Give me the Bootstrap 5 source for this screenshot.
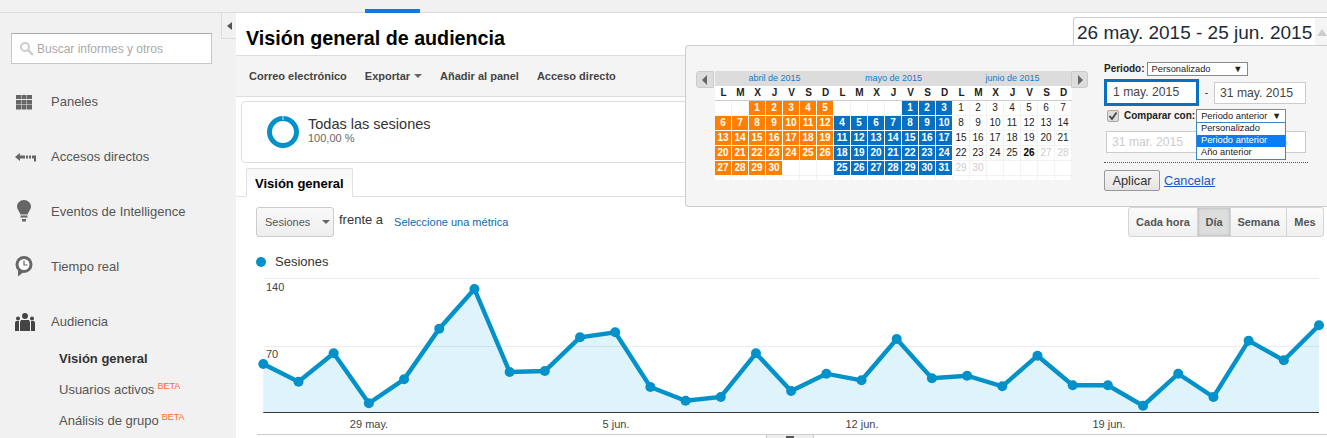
<!doctype html>
<html lang="es">
<head>
  <meta charset="utf-8">
  <meta name="viewport" content="width=device-width, initial-scale=1">
  <title>Visión general de audiencia</title>
  <link href="https://cdn.jsdelivr.net/npm/bootstrap@5.3.3/dist/css/bootstrap.min.css" rel="stylesheet">
  <style>
    html, body { height: 438px; overflow: hidden; }
    body { font-family: "Liberation Sans", Arial, sans-serif; font-size: 13px; color: #333; background: #fff; }

    .top-strip { height: 13px; background: #f1f1f1; border-bottom: 1px solid #dcdcdc; position: relative; }
    .top-strip-active { position: absolute; left: 365px; bottom: -1px; width: 55px; height: 4px; background: #0d7be6; }

    .side { width: 236px; height: 425px; flex: none; background: #f1f1f1; position: relative; }
    .side-toggle { position: absolute; right: 0; top: 0; width: 15px; height: 26px; background: #f1f1f1; border: 1px solid #ddd; border-top: 0; border-right: 0; }
    .side-toggle::after { content: ""; position: absolute; left: 5px; top: 9px; border: 4px solid transparent; border-left: 0; border-right: 5px solid #555; }
    .side-search { margin: 20px 0 0 11px; width: 201px; height: 31px; background: #fff; border: 1px solid #c6c6c6; border-top-color: #aaa; padding-left: 7px; color: #a9a9a9; font-size: 12px; gap: 2px; }
    .side-menu { margin-top: 10px; }
    .side-item { height: 55px; color: #555; font-size: 13px; }
    .side-icon { width: 51px; flex: none; padding-left: 15px; }
    .side-sub { padding-left: 59px; color: #555; margin-top: -6px; }
    .side-sub li { height: 31px; line-height: 31px; white-space: nowrap; }
    .side-sub b { color: #333; }
    .beta { color: #ff6a22; font-size: 9px; position: relative; top: -5px; margin-left: 3px; }

    .main { flex: 1; min-width: 0; position: relative; }
    .main-head { height: 43px; border-bottom: 1px solid #ddd; padding-left: 10px; }
    .main-title { font-size: 19.7px; font-weight: 700; color: #000; margin: 0; line-height: 50px; }
    .date-range { position: absolute; left: 837px; top: 4px; width: 254px; height: 40px; background: #fff; border: 1px solid #ccc; border-right: 0; border-radius: 3px 0 0 0; font-size: 19px; color: #1c2b36; padding: 1px 0 0 3px; white-space: nowrap; }
    .date-range::after { content: ""; position: absolute; right: 0; top: 0; width: 12px; height: 40px; background: #f5f5f5; }
    .date-arrow { position: absolute; right: 0; top: 11px; border: 5px solid transparent; border-top: 0; border-bottom: 7px solid #ccc; z-index: 1; }

    .tool-bar { height: 41px; background: #f4f4f4; border-bottom: 1px solid #ddd; padding-left: 13px; gap: 18px; font-size: 11px; font-weight: 700; color: #444; }
    .caret-down { display: inline-block; margin-left: 4px; vertical-align: 2px; border: 4px solid transparent; border-bottom: 0; border-top: 4px solid #666; }

    .seg-card { margin: 4px 5px 0; height: 62px; border: 1px solid #ddd; border-radius: 4px; padding-left: 25px; gap: 9px; }
    .seg-name { font-size: 14.5px; line-height: 15px; color: #333; margin-top: -2px; }
    .seg-pct { font-size: 11px; line-height: 13px; color: #666; }

    .tab-row { margin-top: 5px; height: 29px; padding-left: 10px; border-bottom: 1px solid #ccc; }
    .tab-row .nav-link { height: 29px; width: 107px; padding: 5px 0 0 8px; font-size: 13px; font-weight: 700; color: #222; border: 1px solid #ccc; border-bottom-color: #fff; border-radius: 2px 2px 0 0; background: linear-gradient(#f7f7f7, #fff); }

    .metric-row { height: 30px; margin-top: 10px; padding: 0 3px 0 20px; }
    .metric-select { width: 78px; height: 30px; border: 1px solid #ccc; border-radius: 3px; background: linear-gradient(#f9f9f9, #eee); color: #555; font-size: 11px; padding: 0 0 0 8px; margin-right: 5px; }
    .metric-select .caret-down { margin-left: 12px; }
    .metric-vs { color: #333; font-size: 13px; margin-right: 11px; position: relative; top: -2px; }
    .metric-link { color: #1266a8; font-size: 11px; text-decoration: none; }
    .time-btns .btn { height: 30px; padding: 0; font-size: 11px; font-weight: 700; color: #555; border: 1px solid #d4d4d4; border-radius: 0; background: linear-gradient(#fafafa, #f0f0f0); }
    .time-btns .btn:first-child { width: 70px; border-radius: 3px 0 0 3px; }
    .time-btns .btn:nth-child(2) { width: 34px; background: #ddd; box-shadow: inset 0 0 3px #aaa; }
    .time-btns .btn:nth-child(3) { width: 57px; }
    .time-btns .btn:last-child { width: 38px; border-radius: 0 3px 3px 0; }

    .legend-row { margin-top: 17px; padding-left: 20px; height: 16px; gap: 9px; font-size: 13px; color: #333; }
    .legend-dot { width: 10px; height: 10px; border-radius: 50%; background: #0391c9; }

    .chart-box { display: block; margin-top: 5px; }
    .chart-box text { font-family: "Liberation Sans", Arial, sans-serif; font-size: 11px; fill: #444; }

    .cal-pop { position: absolute; left: 449px; top: 32px; width: 643px; height: 162px; background: #f5f5f5; border: 1px solid #ccc; border-right: 0; border-radius: 4px 0 0 4px; padding: 25px 0 0 10px; z-index: 5; }
    .cal-nav { width: 18px; height: 17px; background: #dcdcdc; border: 1px solid #ccc; border-radius: 3px 0 0 3px; position: relative; flex: none; }
    .cal-nav::after { content: ""; position: absolute; left: 5px; top: 3px; border: 5px solid transparent; border-left: 0; border-right: 5px solid #666; }
    .cal-nav-next { width: 17px; margin-left: -1px; border-radius: 0 3px 3px 0; }
    .cal-nav-next::after { border-right: 0; border-left: 5px solid #666; left: 6px; }
    .cal-grid { display: grid; grid-template-columns: repeat(21, 17px); grid-auto-rows: 15px; background: #fff; font-size: 10px; text-align: center; width: 357px; height: 109px; margin-left: 1px; overflow: hidden; }
    .cal-month { grid-column: span 7; background: #dcdcdc; color: #0b7ed0; line-height: 14px; font-size: 9px; }
    .cal-day-name { font-weight: 700; color: #222; line-height: 14px; border-bottom: 1px solid #ccc; }
    .cal-cell { line-height: 14px; border-right: 1px solid #f2f2f2; border-bottom: 1px solid #f2f2f2; color: #222; }
    .cal-old { background: #ff7f00; color: #fff; font-weight: 700; border-color: #fff; }
    .cal-cur { background: #0670c4; color: #fff; font-weight: 700; border-color: #fff; }
    .cal-off { color: #ccc; }
    .cal-today { font-weight: 700; color: #000; }

    .cal-side { width: 204px; margin-left: 16px; margin-top: -10px; font-size: 10px; color: #222; position: relative; }
    .cal-label { font-weight: 700; }
    .period-label { margin-right: 2px; }
    .fake-select { background: #fff; border: 1px solid #888; height: 14px; line-height: 12px; padding: 0 4px; font-size: 9.3px; flex: none; }
    .cal-line { padding-right: 2px; margin-top: 3px; }
    .date-in { height: 22px; background: #fff; border: 1px solid #ccc; font-size: 12.2px; color: #444; line-height: 20px; padding-left: 5px; white-space: nowrap; flex: none; }
    .date-on { width: 95px; height: 27px; border: 3px solid #0670c4; padding-left: 6px; }
    .date-end { width: 92px; }
    .date-start { width: 93px; margin-left: 2px; }
    .date-off { color: #ccc; }
    .check-box { width: 12px; height: 12px; margin-left: 3px; border: 1px solid #aaa; border-radius: 2px; background: #ddd; line-height: 0; flex: none; }
    .compare-label { margin-left: 5px; }
    .compare-select { width: 90px; margin-left: 1px; }
    .drop-list { position: absolute; left: 92px; top: 61px; width: 90px; background: #fff; border: 1px solid #3a86c8; font-size: 9.3px; z-index: 6; }
    .drop-list div { height: 12px; line-height: 11px; padding-left: 4px; }
    .drop-list .picked { background: #0a7cf5; color: #fff; }
    .compare-row { margin-top: 2px; }
    .compare-dates { margin-top: 8px; }
    .cal-rule { border-top: 1px dotted #555; margin-top: 9px; }
    .cal-actions { margin-top: 7px; }
    .apply-btn { width: 56px; height: 21px; padding: 0; border: 1px solid #999; border-radius: 2px; background: linear-gradient(#f5f5f5, #e4e4e4); font-size: 12.8px; color: #333; }
    .cancel-link { font-size: 12.8px; color: #1a56c4; }

    .chart-foot { position: absolute; left: 530px; top: 421px; width: 48px; height: 8px; background: #eee; border: 1px solid #ccc; border-bottom: 0; }
    .chart-foot::after { content: ""; position: absolute; left: 19px; top: 1px; width: 8px; height: 2px; background: #555; }
  </style>
</head>
<body>
  <div class="top-strip"><span class="top-strip-active"></span></div>
  <div class="d-flex">
    <aside class="side">
      <span class="side-toggle"></span>
      <div class="side-search d-flex align-items-center">
        <svg width="16" height="16" viewBox="0 0 16 16"><circle cx="6" cy="6" r="4" fill="none" stroke="#ccc" stroke-width="2"/><path d="M9 9l5 5" stroke="#ccc" stroke-width="2.4"/></svg>
        <span>Buscar informes y otros</span>
      </div>
      <ul class="side-menu list-unstyled mb-0">
        <li class="side-item d-flex align-items-center">
          <span class="side-icon"><svg class="d-block" width="18" height="16" viewBox="0 0 18 16" fill="#666"><path d="M2 1h5v4H2zM7.500 1h4.500v4H7.500zM12.500 1H18v4h-5.500zM2 6h5v4.500H2zM7.500 6h4.500v4.500H7.500zM12.500 6H18v4.500h-5.500zM2 11h5v4.500H2zM7.500 11h4.500v4.500H7.500zM12.500 11H18v4.500h-5.500z" transform="translate(-1 0)"/></svg></span>
          <span>Paneles</span>
        </li>
        <li class="side-item d-flex align-items-center">
          <span class="side-icon"><svg class="d-block" width="22" height="12" viewBox="0 0 22 12" fill="#666"><path d="M0 6l5-4v2.500h5v3H5V10zM11 4.500h2v3h-2zM14 4.500h2v3h-2zM17 4.500h4v6h-2v-3h-2z"/></svg></span>
          <span>Accesos directos</span>
        </li>
        <li class="side-item d-flex align-items-center">
          <span class="side-icon"><svg class="d-block" width="18" height="24" viewBox="0 0 18 24" fill="#666"><path d="M9 0c4 0 7 3 7 6.500 0 3-2.500 5-3.500 8h-7c-1-3-3.500-5-3.500-8C2 3 5 0 9 0zM5.500 15.500h7v2h-7zM7 19h4v2.500H7z"/></svg></span>
          <span>Eventos de Intelligence</span>
        </li>
        <li class="side-item d-flex align-items-center">
          <span class="side-icon"><svg class="d-block" width="18" height="21" viewBox="0 0 18 21"><circle cx="9" cy="8.500" r="7" fill="#fff" stroke="#666" stroke-width="3"/><path d="M9 4.500V9h3.500" fill="none" stroke="#666" stroke-width="1.200"/><path d="M3 14v6.500l5-4z" fill="#666"/></svg></span>
          <span>Tiempo real</span>
        </li>
        <li class="side-item d-flex align-items-center">
          <span class="side-icon"><svg class="d-block" width="20" height="18" viewBox="0 0 20 18" fill="#444"><circle cx="10" cy="3" r="3"/><circle cx="3" cy="5.500" r="2"/><circle cx="17" cy="5.500" r="2"/><path d="M6 7h8l1 2v9H5V9zM0 9.500l1-1.500h3v10H0zM16 8h3l1 1.500V18h-4z"/></svg></span>
          <span>Audiencia</span>
        </li>
      </ul>
      <ul class="side-sub list-unstyled mb-0">
        <li><b>Visión general</b></li>
        <li>Usuarios activos<span class="beta">BETA</span></li>
        <li>Análisis de grupo<span class="beta">BETA</span></li>
      </ul>
    </aside>

    <main class="main">
      <div class="main-head"><h1 class="main-title">Visión general de audiencia</h1></div>
      <div class="date-range">26 may. 2015 - 25 jun. 2015<span class="date-arrow"></span></div>

      <div class="tool-bar d-flex align-items-center">
        <span>Correo electrónico</span>
        <span>Exportar<i class="caret-down"></i></span>
        <span>Añadir al panel</span>
        <span>Acceso directo</span>
      </div>

      <div class="seg-card d-flex align-items-center">
        <svg width="32" height="32" viewBox="0 0 32 32"><circle cx="16" cy="16" r="13.500" fill="none" stroke="#0391c9" stroke-width="5"/><path d="M16 0v4" stroke="#fff" stroke-width=".8"/></svg>
        <div>
          <div class="seg-name">Todas las sesiones</div>
          <div class="seg-pct">100,00 %</div>
        </div>
      </div>

      <ul class="nav nav-tabs tab-row border-0 border-bottom">
        <li class="nav-item"><a class="nav-link active" href="#">Visión general</a></li>
      </ul>

      <div class="metric-row d-flex align-items-center">
        <button class="metric-select btn text-start" type="button">Sesiones<i class="caret-down"></i></button>
        <span class="metric-vs">frente a</span>
        <a class="metric-link" href="#">Seleccione una métrica</a>
        <div class="time-btns btn-group ms-auto" role="group">
          <button class="btn" type="button">Cada hora</button>
          <button class="btn" type="button">Día</button>
          <button class="btn" type="button">Semana</button>
          <button class="btn" type="button">Mes</button>
        </div>
      </div>

      <div class="legend-row d-flex align-items-center"><span class="legend-dot"></span><span>Sesiones</span></div>

      <svg class="chart-box" id="chart" width="1091" height="163" viewBox="236 275 1091 163"></svg>
      <span class="chart-foot"></span>

      <div class="cal-pop d-flex">
        <span class="cal-nav"></span>
        <div class="cal-grid" id="calGrid"></div>
        <span class="cal-nav cal-nav-next"></span>
        <div class="cal-side">
          <div class="d-flex align-items-center">
            <span class="cal-label period-label">Periodo:</span>
            <div class="fake-select d-flex justify-content-between" style="width:101px"><span>Personalizado</span><span>▼</span></div>
          </div>
          <div class="cal-line d-flex align-items-center">
            <div class="date-in date-on">1 may. 2015</div>
            <span class="mx-auto">-</span>
            <div class="date-in date-end">31 may. 2015</div>
          </div>
          <div class="compare-row d-flex align-items-center">
            <span class="check-box"><svg width="10" height="10" viewBox="0 0 10 10"><path d="M1.500 5l2.500 3 4.500-6.500" fill="none" stroke="#444" stroke-width="1.800"/></svg></span>
            <span class="cal-label compare-label">Comparar con:</span>
            <div class="fake-select compare-select d-flex justify-content-between"><span>Periodo anterior</span><span>▼</span></div>
          </div>
          <div class="drop-list">
            <div>Personalizado</div>
            <div class="picked">Periodo anterior</div>
            <div>Año anterior</div>
          </div>
          <div class="cal-line compare-dates d-flex align-items-center justify-content-between">
            <div class="date-in date-off date-start">31 mar. 2015</div>
            <div class="date-in date-off date-end">30 abr. 2015</div>
          </div>
          <div class="cal-rule"></div>
          <div class="cal-actions d-flex align-items-center gap-1">
            <button class="apply-btn" type="button">Aplicar</button>
            <a class="cancel-link" href="#">Cancelar</a>
          </div>
        </div>
      </div>
    </main>
  </div>

  <script src="https://cdn.jsdelivr.net/npm/bootstrap@5.3.3/dist/js/bootstrap.bundle.min.js"></script>
  <script>
    // calendario de tres meses
    const calGrid = document.getElementById('calGrid');
    const addCell = (text, cls) => {
      const cell = document.createElement('div');
      cell.className = cls;
      cell.textContent = text;
      calGrid.appendChild(cell);
    };
    ['abril de 2015', 'mayo de 2015', 'junio de 2015'].forEach(m => addCell(m, 'cal-month'));
    for (let i = 0; i < 3; i++) {
      'LMXJVSD'.split('').forEach(d => addCell(d, 'cal-day-name'));
    }
    const months = [
      { start: 2, days: 30, cls: () => 'cal-old' },
      { start: 4, days: 31, cls: () => 'cal-cur' },
      { start: 0, days: 30, cls: d => d > 26 ? 'cal-off' : d === 26 ? 'cal-today' : '' }
    ];
    for (let row = 0; row < 6; row++) {
      months.forEach(m => {
        for (let col = 0; col < 7; col++) {
          const day = row * 7 + col - m.start + 1;
          if (day >= 1 && day <= m.days) addCell(day, 'cal-cell ' + m.cls(day));
          else addCell('', 'cal-cell');
        }
      });
    }

    // sesiones por dia (coordenada y ya en pixeles)
    const ys = [364, 381.7, 353.3, 403.3, 379.3, 328.7, 289, 372, 371, 337.3, 332.3, 387, 400.7, 397, 353.3, 391, 373.7, 380.3, 339, 378.3, 375.7, 386.3, 355.7, 385.3, 385.3, 405.7, 373.7, 397, 340.7, 360.3, 325.3];
    const x0 = 263.3, step = 35.19, axisY = 413;
    const pts = ys.map((y, i) => [x0 + i * step, y]);
    const line = pts.map(p => p.join(',')).join(' ');
    const xEnd = pts[pts.length - 1][0];
    let svg = '';
    svg += `<path d="M${x0} 278.500H${xEnd}M${x0} 346.500H${xEnd}" stroke="#ececec"/>`;
    svg += `<polygon points="${x0},${axisY} ${line} ${xEnd},${axisY}" fill="#00a0d8" fill-opacity=".13"/>`;
    svg += `<path d="M${x0} ${axisY - .5}H${xEnd}" stroke="#333"/>`;
    svg += `<polyline points="${line}" fill="none" stroke="#0391c9" stroke-width="4.400"/>`;
    pts.forEach(p => { svg += `<circle cx="${p[0]}" cy="${p[1]}" r="5" fill="#0391c9"/>`; });
    svg += `<text x="266" y="291">140</text><text x="266" y="358">70</text>`;
    [['29 may.', 369], ['5 jun.', 616], ['12 jun.', 862], ['19 jun.', 1109]].forEach(t => {
      svg += `<text x="${t[1]}" y="428" text-anchor="middle">${t[0]}</text>`;
    });
    svg += `<path d="M257 434.500H1327" stroke="#ccc"/>`;
    document.getElementById('chart').innerHTML = svg;
  </script>
</body>
</html>
